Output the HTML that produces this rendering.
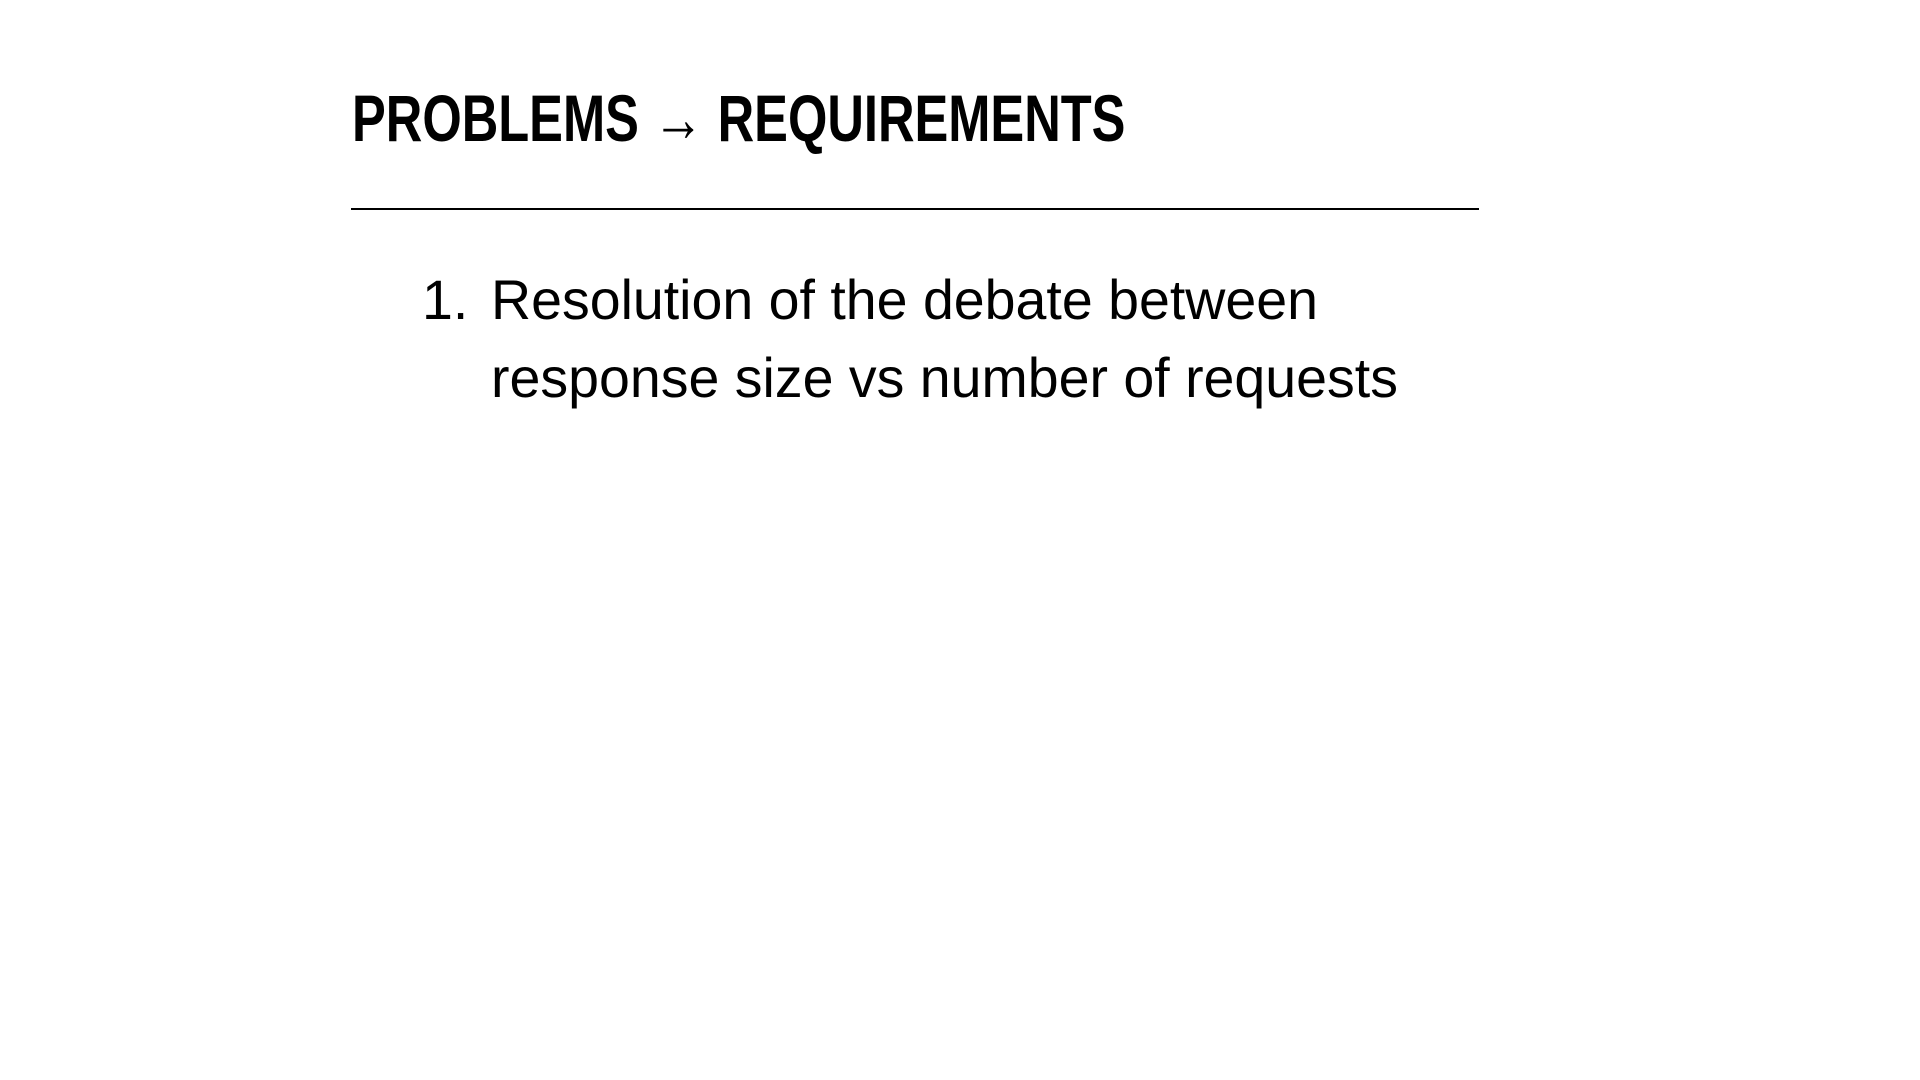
<!DOCTYPE html>
<html><head><meta charset="utf-8"><style>
html,body{margin:0;width:1920px;height:1080px;background:#fff;overflow:hidden}
.t{position:absolute;left:352px;top:78px;font-family:"Liberation Sans Narrow","Liberation Sans",sans-serif;font-weight:bold;font-size:66px;line-height:80px;color:#000;white-space:nowrap;transform-origin:0 0;transform:scaleX(0.767)}
.hr{position:absolute;left:351px;top:208px;width:1128px;height:2px;background:#000}
.l{position:absolute;font-family:"Liberation Sans",sans-serif;font-size:55.5px;color:#000;white-space:nowrap;line-height:78px}
</style></head><body>
<div class="t">PROBLEMS → REQUIREMENTS</div>
<div class="hr"></div>
<div class="l" style="left:422px;top:261px">1.</div>
<div class="l" style="left:491px;top:261px">Resolution of the debate between<br>response size vs number of requests</div>
</body></html>
